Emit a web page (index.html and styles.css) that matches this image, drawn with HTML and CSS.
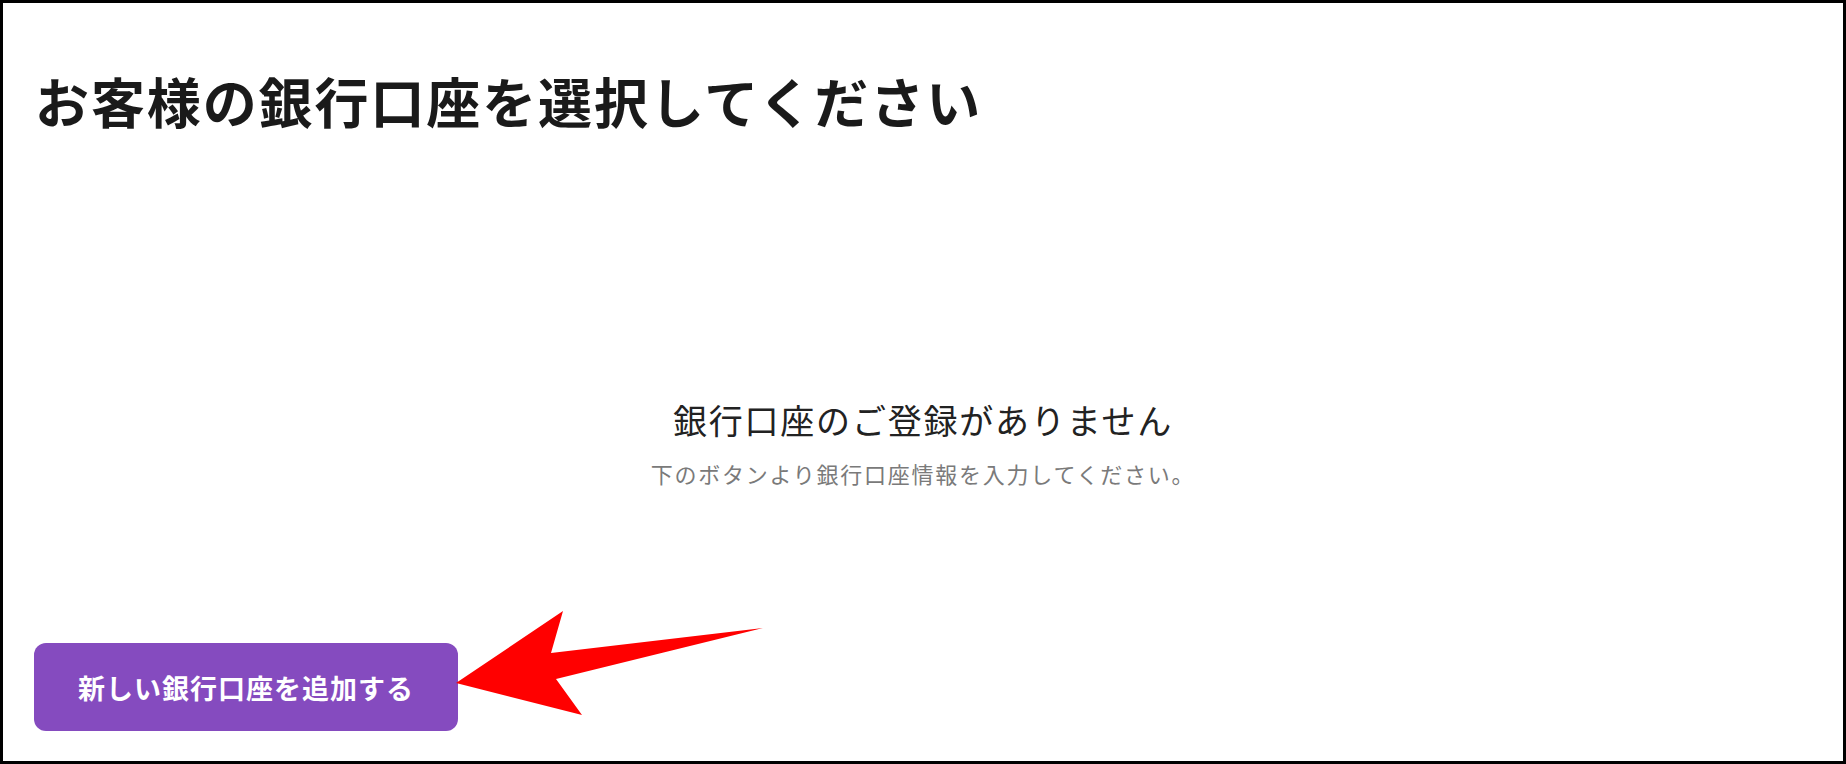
FILE: index.html
```html
<!DOCTYPE html>
<html lang="ja">
<head>
    <meta charset="UTF-8">
    <meta name="viewport" content="width=device-width, initial-scale=1.0">
    <title>銀行口座の選択</title>
    <link rel="stylesheet" href="styles.css">
</head>
<body>
    <div class="marco">
        <h1 class="titulo">お客様の銀行口座を選択してください</h1>

        <!-- Sin cuentas registradas -->
        <div class="vacio">
            <p class="vacio-titulo">銀行口座のご登録がありません</p>
            <p class="vacio-texto">下のボタンより銀行口座情報を入力してください。</p>
        </div>

        <button class="agregar">新しい銀行口座を追加する</button>

        <!-- Flecha que señala el botón -->
        <svg class="flecha" width="320" height="115" viewBox="0 0 320 115">
            <polygon points="6,78 113,6 101,48 313,23 106,74 132,110" fill="#ff0000"/>
        </svg>
    </div>
</body>
</html>
```

FILE: styles.css
```css
body {
    margin: 0;
    padding: 0;
    font-family: "Noto Sans CJK JP", "Noto Sans", sans-serif;
    background: #fff;
}

.marco {
    position: relative;
    box-sizing: border-box;
    width: 1846px;
    height: 764px;
    border: 3px solid #000;
    display: flex;
    flex-direction: column;
}

.titulo {
    margin: 64px 0 0 32px;
    font-size: 54px;
    line-height: 67px;
    font-weight: 700;
    letter-spacing: 1.9px;
    color: #1a1a1a;
}

.vacio {
    margin-top: 264px;
    text-align: center;
}

.vacio-titulo {
    margin: 0;
    font-size: 34px;
    line-height: 43px;
    letter-spacing: 1.8px;
    color: #222;
}

.vacio-texto {
    margin: 17px 0 0;
    font-size: 22px;
    line-height: 31px;
    letter-spacing: 1.75px;
    color: #7a7a7a;
}

.agregar {
    align-self: flex-start;
    margin: 154px 0 0 31px;
    width: 424px;
    height: 88px;
    padding: 0;
    border: none;
    border-radius: 12px;
    background: #854bbf;
    color: #fff;
    font-family: inherit;
    font-size: 27px;
    font-weight: 700;
    letter-spacing: 1px;
    cursor: pointer;
}

.flecha {
    position: absolute;
    left: 447px;
    top: 602px;
}
```
